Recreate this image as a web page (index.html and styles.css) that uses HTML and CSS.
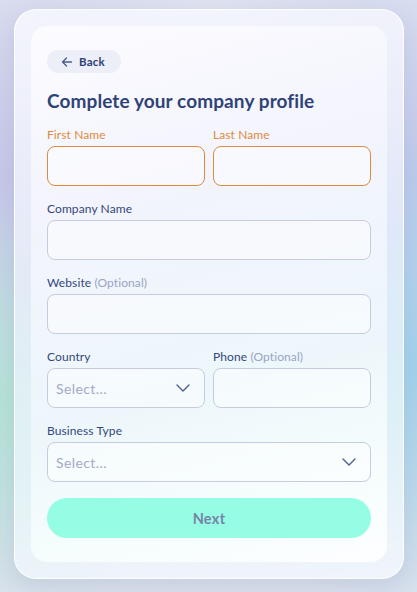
FILE: index.html
```html
<!DOCTYPE html>
<html lang="en">
<head>
<meta charset="utf-8">
<title>Company profile</title>
<link rel="stylesheet" href="styles.css">
</head>
<body>
<div class="shell">
  <div class="card">
    <button class="back" type="button">
      <svg class="back-icon" width="12" height="12" viewBox="0 0 12 12" fill="none" stroke="currentColor" stroke-width="1.3" stroke-linecap="round" stroke-linejoin="round"><path d="M10.5 6H1.5M5.5 2L1.5 6L5.5 10"/></svg>
      <span>Back</span>
    </button>
    <h1 class="title">Complete your company profile</h1>
    <form class="form">
      <div class="row">
        <div class="field">
          <label class="label label-active">First Name</label>
          <div class="input input-active"></div>
        </div>
        <div class="field">
          <label class="label label-active">Last Name</label>
          <div class="input input-active"></div>
        </div>
      </div>
      <div class="field">
        <label class="label">Company Name</label>
        <div class="input"></div>
      </div>
      <div class="field">
        <label class="label">Website <span class="opt">(Optional)</span></label>
        <div class="input"></div>
      </div>
      <div class="row">
        <div class="field">
          <label class="label">Country</label>
          <div class="input select"><span class="placeholder">Select...</span>
            <svg class="chev" width="14" height="8" viewBox="0 0 14 8" fill="none" stroke="currentColor" stroke-width="1.4" stroke-linecap="round" stroke-linejoin="round"><path d="M1 1L7 7L13 1"/></svg>
          </div>
        </div>
        <div class="field">
          <label class="label">Phone <span class="opt">(Optional)</span></label>
          <div class="input"></div>
        </div>
      </div>
      <div class="field">
        <label class="label">Business Type</label>
        <div class="input select"><span class="placeholder">Select...</span>
          <svg class="chev" width="14" height="8" viewBox="0 0 14 8" fill="none" stroke="currentColor" stroke-width="1.4" stroke-linecap="round" stroke-linejoin="round"><path d="M1 1L7 7L13 1"/></svg>
        </div>
      </div>
      <button class="next" type="button">Next</button>
    </form>
  </div>
</div>
</body>
</html>
```
FILE: styles.css
```css
* { box-sizing: border-box; }
html, body { height: 100%; }
body {
  margin: 0;
  font-family: Lato, "Noto Sans", sans-serif;
  background:
    radial-gradient(ellipse 60% 35% at 0% 68%, rgba(178, 228, 214, 0.9), rgba(178, 228, 214, 0) 100%),
    radial-gradient(ellipse 60% 40% at 100% 62%, rgba(160, 210, 236, 0.95), rgba(160, 210, 236, 0) 100%),
    radial-gradient(ellipse 70% 40% at 0% 30%, rgba(196, 198, 232, 0.9), rgba(196, 198, 232, 0) 100%),
    radial-gradient(ellipse 70% 40% at 100% 30%, rgba(192, 200, 236, 0.9), rgba(192, 200, 236, 0) 100%),
    linear-gradient(180deg, #e0e3f1 0%, #d9ddef 40%, #d3e0ea 80%, #dde2ee 100%);
  padding: 9px 13px 0 14px;
}
.shell {
  width: 390px;
  height: 570px;
  padding: 16px;
  border-radius: 22px;
  background: linear-gradient(170deg, rgba(246, 247, 253, 0.9) 0%, rgba(236, 240, 252, 0.75) 45%, rgba(234, 246, 250, 0.8) 75%, rgba(242, 246, 252, 0.92) 100%);
  border: 1px solid rgba(255, 255, 255, 0.95);
  box-shadow: 0 8px 24px rgba(120, 130, 170, 0.22);
}
.card {
  height: 536px;
  border-radius: 16px;
  padding: 24px 16px;
  background: linear-gradient(165deg, #fcfcff 0%, #f3f4fd 30%, #edf7fb 65%, #f6fdfd 85%, #fdfeff 100%);
}
.back {
  display: inline-flex;
  align-items: center;
  gap: 6px;
  height: 23px;
  width: 74px;
  padding: 0 0 0 14px;
  border: none;
  border-radius: 12px;
  background: #eceff7;
  color: #2e4176;
  font-family: inherit;
  font-weight: 700;
  font-size: 11.5px;
  letter-spacing: 0.2px;
}
.back-icon { color: #4a5b8e; }
.title {
  margin: 16px 0 0;
  font-size: 19px;
  line-height: 24px;
  font-weight: 700;
  color: #2f4377;
  letter-spacing: 0.1px;
}
.form {
  margin-top: 14px;
  display: flex;
  flex-direction: column;
  gap: 15px;
}
.row {
  display: grid;
  grid-template-columns: 1fr 1fr;
  gap: 8px;
}
.field { display: flex; flex-direction: column; }
.label {
  font-size: 12px;
  line-height: 16px;
  margin-bottom: 3px;
  color: #34477b;
  letter-spacing: 0.1px;
}
.label-active { color: #e08a3c; }
.opt { color: #9aa3c5; }
.input {
  height: 40px;
  border: 1px solid #c6cbe0;
  border-radius: 8px;
  background: rgba(255, 255, 255, 0.45);
}
.input-active { border-color: #df8a3d; }
.select {
  display: flex;
  align-items: center;
  justify-content: space-between;
  padding: 0 14px 0 8px;
}
.placeholder {
  font-size: 14px;
  color: #a2aac7;
  letter-spacing: 0.4px;
}
.chev { color: #4d5c8a; }
.next {
  margin-top: 1px;
  height: 40px;
  border: none;
  border-radius: 20px;
  background: #95fde3;
  color: #7882a7;
  font-family: inherit;
  font-weight: 700;
  font-size: 14.5px;
  letter-spacing: 0.3px;
}
```
